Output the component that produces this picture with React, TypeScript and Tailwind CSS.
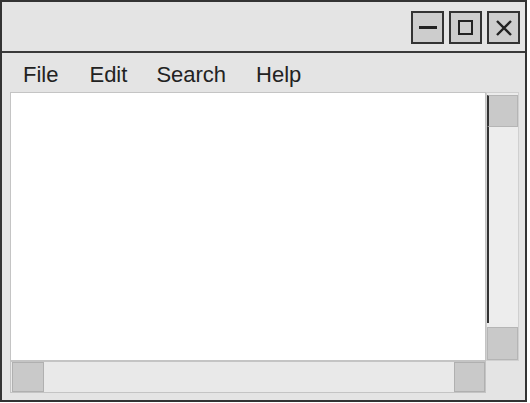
export default function App() {
  const menu = [
    { label: 'File', cls: '' },
    { label: 'Edit', cls: 'ml-[31px]' },
    { label: 'Search', cls: 'ml-[29px]' },
    { label: 'Help', cls: 'ml-[30px]' },
  ]

  return (
    <div className="w-[530px] h-[403px] bg-white">
      <div className="w-[527px] h-[402px] border-2 border-[#333] bg-[#e4e4e4] flex flex-col" style={{ fontFamily: '"Liberation Sans", Arial, sans-serif' }}>
        {/* Title bar */}
        <div className="h-[51px] shrink-0 border-b-2 border-[#3a3a3a] flex items-center justify-end gap-[5px] pr-[5px] pt-[2px]">
          <button className="w-[33px] h-[33px] border-2 border-[#333] bg-[#cdcdcd] flex items-center justify-center">
            <span className="block w-[18px] h-[3px] bg-[#222]" />
          </button>
          <button className="w-[33px] h-[33px] border-2 border-[#333] bg-[#cdcdcd] flex items-center justify-center">
            <span className="block w-[15px] h-[15px] border-2 border-[#222]" />
          </button>
          <button className="w-[33px] h-[33px] border-2 border-[#333] bg-[#cdcdcd] flex items-center justify-center">
            <svg width="18" height="18" viewBox="0 0 18 18">
              <path d="M2 2 L16 16 M16 2 L2 16" stroke="#222" strokeWidth="2.4" />
            </svg>
          </button>
        </div>

        {/* Menu bar */}
        <div className="h-[39px] shrink-0 flex items-center pl-[21px] pt-[4px] text-[22px] text-[#222]">
          {menu.map(m => (
            <span key={m.label} className={m.cls}>{m.label}</span>
          ))}
        </div>

        {/* Client area */}
        <div className="grid grid-cols-[476px_33px] grid-rows-[269px_32px] ml-[8px]">
          <div className="bg-white border border-[#c4c4c4]" />

          {/* Vertical scrollbar */}
          <div className="flex flex-col pt-[2px] border border-[#d0d0d0] bg-[#ececec]">
            <div className="h-[32px] shrink-0 bg-[#c9c9c9] border border-[#b5b5b5] border-l-2 border-l-[#333]" />
            <div className="flex-1 border-l-2 border-[#333] mb-[4px] bg-[#ededed]" />
            <div className="h-[33px] shrink-0 bg-[#c9c9c9] border border-[#b5b5b5]" />
          </div>

          {/* Horizontal scrollbar */}
          <div className="flex border border-[#c4c4c4] bg-[#e9e9e9]">
            <div className="w-[32px] shrink-0 ml-[1px] bg-[#c9c9c9] border border-[#b0b0b0]" />
            <div className="flex-1 bg-[#e9e9e9]" />
            <div className="w-[31px] shrink-0 bg-[#c9c9c9] border border-[#b0b0b0]" />
          </div>
          <div />
        </div>
      </div>
    </div>
  )
}
